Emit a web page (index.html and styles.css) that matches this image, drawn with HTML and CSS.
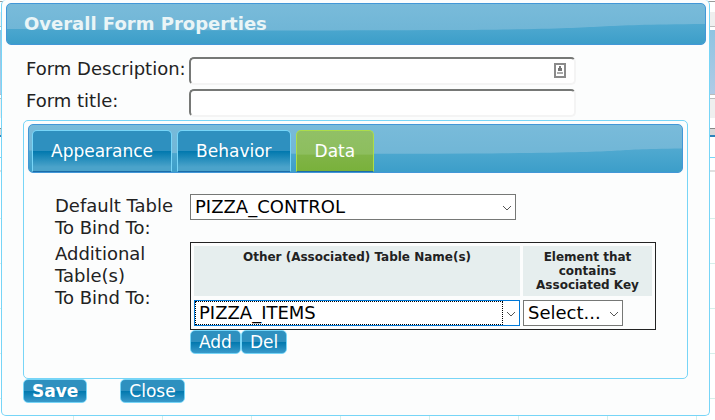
FILE: index.html
```html
<!DOCTYPE html>
<html lang="en">
<head>
  <meta charset="UTF-8">
  <meta name="viewport" content="width=device-width, initial-scale=1.0">
  <title>Overall Form Properties</title>
  <link rel="stylesheet" href="styles.css">
</head>
<body>

  <form class="dialog">
    <header class="dialog-title">
      <svg class="wave" viewBox="0 0 698 40" preserveAspectRatio="none" aria-hidden="true">
        <defs>
          <linearGradient id="waveFill" x2="0" y2="1">
            <stop offset="0" stop-color="#50a9d0"/>
            <stop offset="1" stop-color="#3c9ec9"/>
          </linearGradient>
        </defs>
        <path d="M0 25 C120 26 260 27 440 26 S560 21 698 20 V40 H0 Z"/>
      </svg>
      <h1>Overall Form Properties</h1>
    </header>

    <div class="dialog-body">
      <div class="fields">
        <label for="formDesc">Form Description:</label>
        <div class="text-field">
          <input type="text" id="formDesc">
          <svg class="fill-icon" viewBox="0 0 12 15" aria-hidden="true">
            <rect x="1" y="1" width="10" height="13" fill="#fff" stroke="#8a8a8a" stroke-width="2"/>
            <path d="M5 3h2v2h1v3H4V5h1z" fill="#777"/>
            <path d="M3 9h6v2H3z" fill="#aaa"/>
          </svg>
        </div>
        <label for="formTitle">Form title:</label>
        <div class="text-field"><input type="text" id="formTitle"></div>
      </div>

      <div class="tabs">
        <nav class="tab-bar">
          <svg class="wave" viewBox="0 0 650 48" preserveAspectRatio="none" aria-hidden="true">
            <path d="M0 26 C120 29 260 30 440 29 S560 25 650 24 V48 H0 Z"/>
          </svg>
          <a class="tab" href="#appearance">Appearance</a>
          <a class="tab" href="#behavior">Behavior</a>
          <a class="tab active" href="#data">Data</a>
        </nav>

        <div class="tab-panel" id="data">
          <label for="defaultTable">Default Table<br>To Bind To:</label>
          <div class="select default-table">
            <select id="defaultTable"><option>PIZZA_CONTROL</option></select>
            <svg class="arrow" viewBox="0 0 10 6" aria-hidden="true"><path d="M1 1l4 4 4-4"/></svg>
          </div>

          <label for="otherTable">Additional Table(s)<br>To Bind To:</label>
          <div>
            <table class="bindings">
              <thead>
                <tr>
                  <th class="col-table">Other (Associated) Table Name(s)</th>
                  <th class="col-key">Element that contains Associated Key</th>
                </tr>
              </thead>
              <tbody>
                <tr>
                  <td>
                    <div class="select focused">
                      <select id="otherTable"><option>PIZZA_ITEMS</option></select>
                      <svg class="arrow" viewBox="0 0 10 6" aria-hidden="true"><path d="M1 1l4 4 4-4"/></svg>
                    </div>
                  </td>
                  <td>
                    <div class="select key">
                      <select aria-label="Associated key"><option>Select...</option></select>
                      <svg class="arrow" viewBox="0 0 10 6" aria-hidden="true"><path d="M1 1l4 4 4-4"/></svg>
                    </div>
                  </td>
                </tr>
              </tbody>
            </table>
            <div class="row-buttons">
              <button type="button">Add</button><button type="button">Del</button>
            </div>
          </div>
        </div>
      </div>

      <div class="dialog-buttons">
        <button type="submit" class="save">Save</button>
        <button type="button">Close</button>
      </div>
    </div>
  </form>

</body>
</html>
```
FILE: styles.css
```css
* {
  box-sizing: border-box;
}

/* the page behind the dialog: toolbar strips on top, grid lines below */
body {
  min-height: 100vh;
  margin: 0;
  padding: 0 5px 4px 1px;
  font-family: Verdana, "DejaVu Sans", sans-serif;
  font-size: 18px;
  line-height: 22px;
  color: #222;
  background:
    linear-gradient(#fff 0 1px, #999 1px 2px, #fff 2px 12px, #efefef 12px 26px, #bbb 26px 27px, #fff 27px 30px, #8fc4e2 30px, #b0cbe6 94px, #bbb 94px 95px, #fff 95px 98px, #bbb 98px 99px, #efefef 99px 118px, #fff 118px 128px, #888 128px 129px, #d8d8d8 129px 135px, #2e83bb 135px 137px, #fff 137px 157px, #77d5f7 157px 158px, #fff 158px 170px, #e0e0e0 170px 172px, #fff 172px) 0 0 / 100% 173px no-repeat,
    repeating-linear-gradient(transparent 0 44px, #d5efea 44px 45px) 0 174px / 100% 100% no-repeat,
    repeating-linear-gradient(90deg, transparent 0 88px, #d5efea 88px 89px) -15px 0,
    #fff;
}

.dialog {
  padding: 3px 3px 12px 4px;
  border: 1px solid #77d5f7;
  border-top: 0;
  border-radius: 5px;
  background: #fcfdfd;
}

.dialog-title {
  position: relative;
  padding: 9px 17px;
  border: 1px solid #4297d7;
  border-radius: 5px;
  background: linear-gradient(#79bbda, #6bb3d4);
  overflow: hidden;
}

.dialog-title h1 {
  position: relative;
  margin: 0;
  font-size: 18px;
  line-height: 22px;
  color: #eaf5f7;
}

.wave {
  position: absolute;
  inset: 0;
  width: 100%;
  height: 100%;
  fill: url(#waveFill);
}

.wave path {
  fill: inherit;
}

.dialog-body {
  padding: 12px 18px 0 17px;
}

.fields {
  display: grid;
  grid-template-columns: 160px 1fr;
  column-gap: 3px;
  row-gap: 4px;
  padding-left: 3px;
}

.fields label {
  padding-top: 1px;
  white-space: nowrap;
}

.text-field {
  position: relative;
  width: 387px;
  max-width: 100%;
}

.text-field input {
  display: block;
  width: 100%;
  height: 28px;
  padding: 2px 4px;
  border: 2px solid #f4f4f4;
  border-top-color: #767876;
  border-left-color: #767876;
  border-radius: 5px;
  font: inherit;
  background: #fff;
}

.fill-icon {
  position: absolute;
  top: 6px;
  right: 10px;
  width: 12px;
  height: 15px;
}

.tabs {
  margin-top: 3px;
  padding: 3px 4px;
  border: 1px solid #77d5f7;
  border-radius: 5px;
}

.tab-bar {
  position: relative;
  display: flex;
  gap: 5px;
  padding: 5px 3px 0;
  border: 1px solid #4297d7;
  border-radius: 5px;
  background: linear-gradient(#79bbda, #6bb3d4);
  overflow: hidden;
}

.tab {
  position: relative;
  padding: 9px 18px;
  border: 1px solid #77d5f7;
  border-bottom: 1px solid #1b6ca8;
  border-radius: 5px 5px 0 0;
  font-size: 17px;
  color: #fff;
  text-decoration: none;
  background: linear-gradient(#2e90bf 0 49%, #0078ae 50%, #4ba3ca 90%);
}

.tab.active {
  border-color: #acdd4a;
  border-bottom-color: #1b6ca8;
  background: linear-gradient(#91c066, #8dbe5e 58%, #80b447 60%, #79b13b);
}

.tab-panel {
  display: grid;
  grid-template-columns: 132px 1fr;
  column-gap: 3px;
  row-gap: 3px;
  padding: 21px 20px 21px 27px;
}

.tab-panel label {
  padding-top: 1px;
}

.select {
  position: relative;
}

.select select {
  display: block;
  width: 100%;
  height: 26px;
  padding: 0 16px 0 4px;
  border: 1px solid #767876;
  border-radius: 0;
  appearance: none;
  font: inherit;
  color: #000;
  background: #fff;
}

.arrow {
  position: absolute;
  top: 11px;
  right: 4px;
  width: 10px;
  height: 6px;
  fill: none;
  stroke: #555;
  pointer-events: none;
}

.default-table {
  width: 326px;
}

.bindings {
  border: 1px solid #222;
  border-spacing: 3px;
}

.bindings th {
  padding: 4px 8px;
  font-size: 12px;
  line-height: 14px;
  vertical-align: top;
  background: #e6eeee;
}

.bindings td {
  padding: 1px 0 0;
}

.bindings .col-table {
  width: 326px;
}

.bindings .col-key {
  width: 129px;
}

.select.focused select {
  border-color: #0078d7;
}

.focused::after {
  content: "";
  position: absolute;
  inset: 1px 17px 1px 1px;
  border: 1px dotted #000;
  pointer-events: none;
}

.key {
  width: 100px;
}

.row-buttons {
  display: flex;
}

button {
  padding: 0 8px;
  border: 1px solid #77d5f7;
  border-radius: 5px;
  font: inherit;
  font-size: 17px;
  color: #fff;
  background: linear-gradient(#2e90bf 0 49%, #0078ae 50%, #3a9aca);
}

.dialog-buttons {
  display: flex;
  gap: 33px;
}

.save {
  font-weight: bold;
}
```
